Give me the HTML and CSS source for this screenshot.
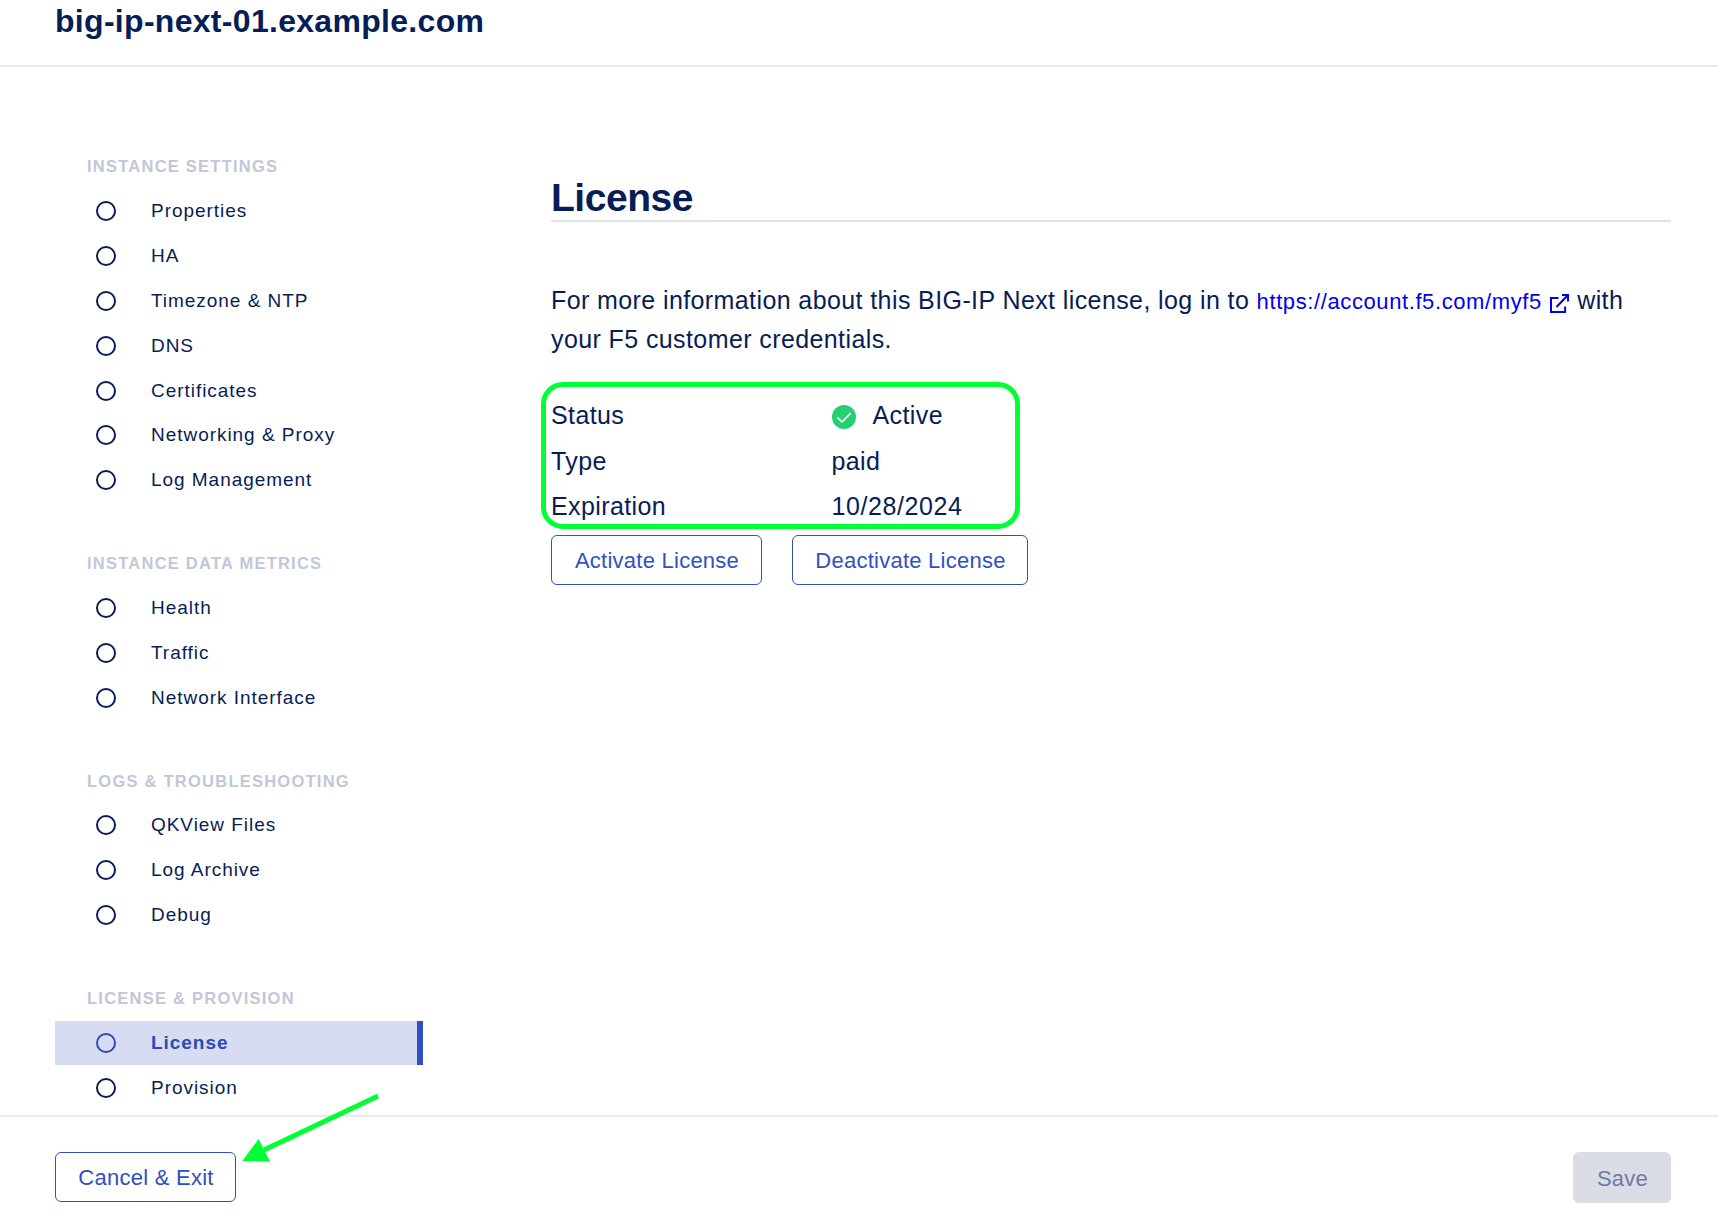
FILE: index.html
```html
<!DOCTYPE html>
<html lang="en">
<head>
<meta charset="utf-8">
<title>License</title>
<link rel="stylesheet" href="styles.css">
</head>
<body>
<header class="header"><h1 class="host">big-ip-next-01.example.com</h1></header>
<main class="main">
  <nav class="nav">
    <section class="group">
      <h2 class="group-title">INSTANCE SETTINGS</h2>
      <a class="item"><span class="ring"></span>Properties</a>
      <a class="item"><span class="ring"></span>HA</a>
      <a class="item"><span class="ring"></span>Timezone &amp; NTP</a>
      <a class="item"><span class="ring"></span>DNS</a>
      <a class="item"><span class="ring"></span>Certificates</a>
      <a class="item"><span class="ring"></span>Networking &amp; Proxy</a>
      <a class="item"><span class="ring"></span>Log Management</a>
    </section>
    <section class="group">
      <h2 class="group-title">INSTANCE DATA METRICS</h2>
      <a class="item"><span class="ring"></span>Health</a>
      <a class="item"><span class="ring"></span>Traffic</a>
      <a class="item"><span class="ring"></span>Network Interface</a>
    </section>
    <section class="group">
      <h2 class="group-title">LOGS &amp; TROUBLESHOOTING</h2>
      <a class="item"><span class="ring"></span>QKView Files</a>
      <a class="item"><span class="ring"></span>Log Archive</a>
      <a class="item"><span class="ring"></span>Debug</a>
    </section>
    <section class="group">
      <h2 class="group-title">LICENSE &amp; PROVISION</h2>
      <a class="item active"><span class="ring"></span>License</a>
      <a class="item"><span class="ring"></span>Provision</a>
    </section>
  </nav>
  <section class="content">
    <h2 class="title">License</h2>
    <p class="info">For more information about this BIG-IP Next license, log in to <a class="link">https://account.f5.com/myf5<svg class="ext" width="19" height="19" viewBox="0 0 19 19"><path d="M8.5 3.9H1V18H15.1V12.5M6.5 13L17.5 1.5M12 1H18V7.5" fill="none" stroke="currentColor" stroke-width="2"/></svg></a> with<br>your F5 customer credentials.</p>
    <dl class="facts">
      <dt>Status</dt>
      <dd class="status"><svg class="check" width="24" height="24" viewBox="0 0 24 24"><circle cx="12" cy="12" r="12" fill="#25d070"/><path d="M5.8 12.9L10 17L18.2 8.6" fill="none" stroke="#fff" stroke-width="1.6" stroke-linecap="round" stroke-linejoin="round"/></svg>Active</dd>
      <dt>Type</dt><dd>paid</dd>
      <dt>Expiration</dt><dd class="date">10/28/2024</dd>
    </dl>
    <div class="actions">
      <button class="btn activate">Activate License</button>
      <button class="btn deactivate">Deactivate License</button>
    </div>
  </section>
</main>
<footer class="footer">
  <button class="btn cancel">Cancel &amp; Exit</button>
  <button class="btn save" disabled>Save</button>
</footer>
<div class="highlight"></div>
<svg class="arrow" width="150" height="80" viewBox="0 0 150 80"><path d="M138 6L24 60" stroke="#00ff33" stroke-width="5"/><path d="M2.3 71L18.7 49L30 71.7Z" fill="#00ff33"/></svg>
</body>
</html>
```
FILE: styles.css
```css
* { box-sizing: border-box; }
body {
  margin: 0;
  height: 1218px;
  overflow: hidden;
  position: relative;
  display: flex;
  flex-direction: column;
  background: #fff;
  color: #071d55;
  font-family: "Liberation Sans", Arial, sans-serif;
}
h1, h2, p, dl, dd { margin: 0; }
.header {
  flex: 0 0 67px;
  padding: 3px 55px 0;
  border-bottom: 2px solid #e6e9f4;
}
.host { font-size: 32px; line-height: 36px; letter-spacing: 0.3px; }
.main { flex: 0 0 1048px; min-height: 0; display: flex; }
.nav { flex: 0 0 423px; padding: 76.4px 0 0 55px; }
.group { margin-bottom: 37.6px; }
.group:last-child { margin-bottom: 0; }
.group-title {
  height: 45.2px;
  padding-left: 32px;
  font-size: 16.5px;
  line-height: 46.2px;
  letter-spacing: 1.24px;
  color: #c1c7d8;
}
.item {
  display: flex;
  align-items: center;
  height: 44.9px;
  padding-left: 41px;
  font-size: 19px;
  letter-spacing: 0.96px;
}
.ring {
  width: 20px;
  height: 20px;
  margin-right: 35px;
  border: 2px solid currentColor;
  border-radius: 50%;
}
.active {
  background: #d7dcf2;
  border-right: 6px solid #2f50c1;
  color: #2c4bb5;
  font-weight: bold;
}
.content { width: 1120px; margin-left: 128px; padding-top: 108px; }
.title {
  height: 47px;
  border-bottom: 2px solid #dfe2e7;
  font-size: 39px;
  line-height: 46px;
  letter-spacing: -0.45px;
}
.info {
  margin-top: 59px;
  font-size: 25px;
  line-height: 39px;
  letter-spacing: 0.4px;
  white-space: nowrap;
}
.link { color: #0000ee; font-size: 22px; line-height: 1; letter-spacing: 0.6px; }
.ext { margin: 0 1px 0 8px; vertical-align: -4px; }
.facts {
  display: grid;
  grid-template-columns: 280.5px 1fr;
  grid-auto-rows: 45.5px;
  margin-top: 34px;
  font-size: 25px;
  line-height: 45.5px;
  letter-spacing: 0.4px;
}
.status { display: flex; align-items: center; gap: 17px; }
.check { margin-top: 3px; }
.date { letter-spacing: 0.6px; }
.actions { display: flex; gap: 30px; margin-top: 5.5px; }
.btn {
  height: 50px;
  padding: 1px 0 0 1px;
  border: 1px solid #2f50c1;
  border-radius: 6px;
  background: #fff;
  color: #2f50c1;
  font: 22px/47px "Liberation Sans", Arial, sans-serif;
  letter-spacing: 0.25px;
}
.activate { width: 211px; }
.deactivate { width: 236px; }
.cancel { width: 181px; }
.save { width: 98px; height: 51px; border: 0; background: #dadde5; color: #6f7ba3; }
.footer {
  flex: 0 0 103px;
  display: flex;
  justify-content: space-between;
  align-items: flex-start;
  padding: 35px 47px 0 55px;
  border-top: 2px solid #e6e9f4;
}
.highlight {
  position: absolute;
  left: 541px;
  top: 382px;
  width: 479px;
  height: 147px;
  border: 5px solid #00ff33;
  border-radius: 22px;
}
.arrow { position: absolute; left: 240px; top: 1090px; }
```
